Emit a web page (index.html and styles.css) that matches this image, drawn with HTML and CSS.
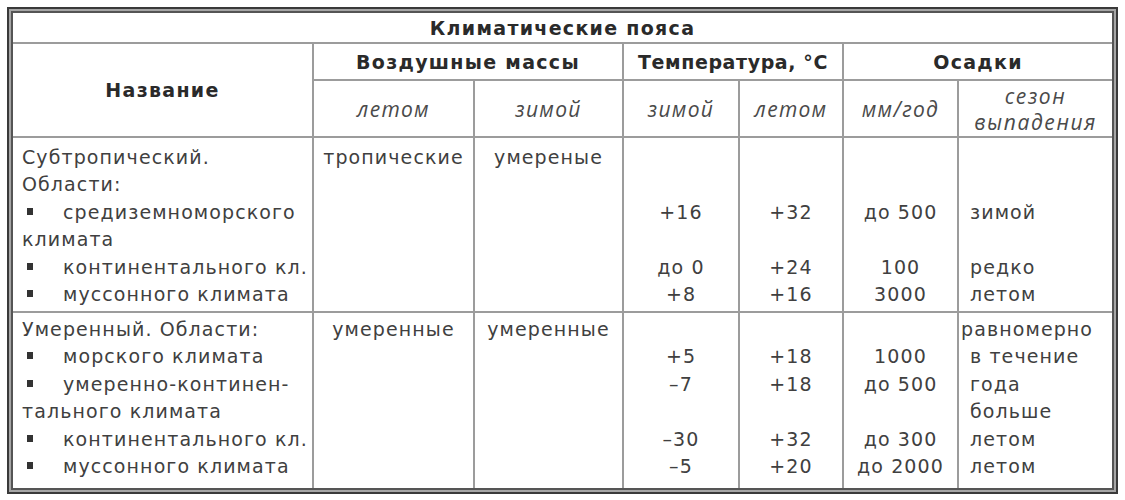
FILE: index.html
```html
<!DOCTYPE html>
<html lang="ru">
<head>
<meta charset="utf-8">
<title>Климатические пояса</title>
<link rel="stylesheet" href="styles.css">
</head>
<body>
<div class="frame">
  <div class="inner">
    <table class="climate">
      <colgroup>
        <col class="c-name">
        <col class="c-air1">
        <col class="c-air2">
        <col class="c-t1">
        <col class="c-t2">
        <col class="c-mm">
        <col class="c-season">
      </colgroup>
      <tr class="r-title">
        <th colspan="7" class="head">Климатические пояса</th>
      </tr>
      <tr class="r-h1">
        <th rowspan="2" class="head">Название</th>
        <th colspan="2" class="head">Воздушные массы</th>
        <th colspan="2" class="head head-tight">Температура, °C</th>
        <th colspan="2" class="head">Осадки</th>
      </tr>
      <tr class="r-h2">
        <th class="sub">летом</th>
        <th class="sub">зимой</th>
        <th class="sub">зимой</th>
        <th class="sub">летом</th>
        <th class="sub">мм/год</th>
        <th class="sub sub-two">сезон<br>выпадения</th>
      </tr>
      <tr class="r-body r-first">
        <td class="desc">
          <div class="ln">Субтропический.</div>
          <div class="ln">Области:</div>
          <div class="ln"><span class="bullet"></span>средиземноморского</div>
          <div class="ln">климата</div>
          <div class="ln"><span class="bullet"></span>континентального кл.</div>
          <div class="ln"><span class="bullet"></span>муссонного климата</div>
        </td>
        <td class="mid"><div class="ln">тропические</div></td>
        <td class="mid"><div class="ln">умереные</div></td>
        <td class="mid">
          <div class="ln"></div><div class="ln"></div>
          <div class="ln">+16</div><div class="ln"></div>
          <div class="ln">до 0</div><div class="ln">+8</div>
        </td>
        <td class="mid">
          <div class="ln"></div><div class="ln"></div>
          <div class="ln">+32</div><div class="ln"></div>
          <div class="ln">+24</div><div class="ln">+16</div>
        </td>
        <td class="mid">
          <div class="ln"></div><div class="ln"></div>
          <div class="ln">до 500</div><div class="ln"></div>
          <div class="ln">100</div><div class="ln">3000</div>
        </td>
        <td class="season">
          <div class="ln"></div><div class="ln"></div>
          <div class="ln">зимой</div><div class="ln"></div>
          <div class="ln">редко</div><div class="ln">летом</div>
        </td>
      </tr>
      <tr class="r-body r-second">
        <td class="desc">
          <div class="ln">Умеренный. Области:</div>
          <div class="ln"><span class="bullet"></span>морского климата</div>
          <div class="ln"><span class="bullet"></span>умеренно-континен-</div>
          <div class="ln">тального климата</div>
          <div class="ln"><span class="bullet"></span>континентального кл.</div>
          <div class="ln"><span class="bullet"></span>муссонного климата</div>
        </td>
        <td class="mid"><div class="ln">умеренные</div></td>
        <td class="mid"><div class="ln">умеренные</div></td>
        <td class="mid">
          <div class="ln"></div>
          <div class="ln">+5</div><div class="ln">–7</div>
          <div class="ln"></div>
          <div class="ln">–30</div><div class="ln">–5</div>
        </td>
        <td class="mid">
          <div class="ln"></div>
          <div class="ln">+18</div><div class="ln">+18</div>
          <div class="ln"></div>
          <div class="ln">+32</div><div class="ln">+20</div>
        </td>
        <td class="mid">
          <div class="ln"></div>
          <div class="ln">1000</div><div class="ln">до 500</div>
          <div class="ln"></div>
          <div class="ln">до 300</div><div class="ln">до 2000</div>
        </td>
        <td class="season">
          <div class="ln first-word">равномерно</div>
          <div class="ln">в течение</div>
          <div class="ln">года</div>
          <div class="ln">больше</div>
          <div class="ln">летом</div>
          <div class="ln">летом</div>
        </td>
      </tr>
    </table>
  </div>
</div>
</body>
</html>
```

FILE: styles.css
```css
body {
  margin: 0;
  background: #ffffff;
  font-family: "DejaVu Sans", "Liberation Sans", sans-serif;
  color: #404040;
}

.frame {
  margin: 7px;
  width: 1103px;
  border: 2px solid #3a3a3a;
  padding: 2px;
  background: #a6a6a6;
}

.inner {
  border: 2px solid #555555;
  background: #ffffff;
}

.climate {
  width: 1099px;
  border-collapse: collapse;
  border-style: hidden;
  table-layout: fixed;
}

.climate th,
.climate td {
  border: 2px solid #9c9c9c;
  padding: 0;
}

.c-name { width: 300px; }
.c-air1 { width: 161px; }
.c-air2 { width: 149px; }
.c-t1 { width: 116px; }
.c-t2 { width: 104px; }
.c-mm { width: 115px; }
.c-season { width: 154px; }

.r-title { height: 30px; }
.r-h1 { height: 37px; }
.r-h2 { height: 57px; }
.r-first { height: 175px; }
.r-second { height: 176px; }

.climate .head {
  font-size: 19px;
  font-weight: bold;
  color: #2a2a2a;
  text-align: center;
  vertical-align: middle;
  letter-spacing: 1.3px;
}

.climate .head-tight {
  letter-spacing: 0.6px;
}

.climate .sub {
  font-family: "Open Sans", "Liberation Sans", sans-serif;
  font-style: italic;
  font-weight: normal;
  font-size: 21px;
  letter-spacing: 1.3px;
  color: #4a4a4a;
  text-align: center;
  vertical-align: middle;
}

.climate .sub-two {
  line-height: 26px;
  letter-spacing: 1.6px;
}

.climate .r-body td {
  vertical-align: top;
  font-size: 19px;
  letter-spacing: 1.1px;
}

.climate .r-first td { padding-top: 6px; }
.climate .r-second td { padding-top: 3px; }

.ln {
  height: 27.4px;
  line-height: 27.4px;
  white-space: nowrap;
}

.climate .desc { padding-left: 9px; }
.climate .mid { text-align: center; }
.climate .season { padding-left: 11px; }
.first-word { margin-left: -9px; }

.bullet {
  display: inline-block;
  width: 6px;
  height: 7px;
  background: #333333;
  margin-left: 5px;
  margin-right: 30px;
  vertical-align: 4px;
}
```
